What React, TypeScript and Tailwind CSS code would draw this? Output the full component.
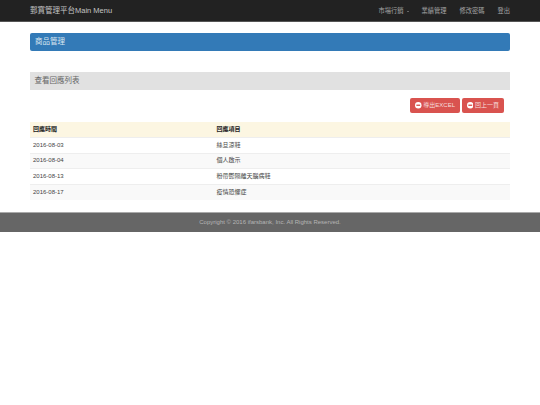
const rows = [
  { date: '2016-08-03', item: '絲旦涼鞋' },
  { date: '2016-08-04', item: '個人啟示' },
  { date: '2016-08-13', item: '粉帶鬱隔離天腦病鞋' },
  { date: '2016-08-17', item: '疫情恐懼症' },
];

const font = "font-['Liberation_Sans','Noto_Sans_CJK_TC',sans-serif]";

function RedButton({ label }: { label: string }) {
  return (
    <button className="flex h-[15px] items-center gap-[1.5px] rounded-[2px] bg-[#d9534f] px-[5px] text-[6px] text-[#f5dedd]">
      <svg viewBox="0 0 24 24" className="h-[6.5px] w-[6.5px]">
        <circle cx="12" cy="12" r="12" fill="#fff" />
        <rect x="5" y="9.5" width="14" height="5" fill="#d9534f" />
      </svg>
      {label}
    </button>
  );
}

export default function App() {
  return (
    <div className={`min-h-screen bg-white ${font}`}>
      <nav className="flex h-[22px] items-center justify-between border-b border-[#555] bg-[#222] px-[30px] text-[6.25px] text-[#a5a5a5]">
        <span className="text-[7.5px] text-[#c4c4c4]">郵寶管理平台Main Menu</span>
        <ul className="flex gap-[13px]">
          <li className="flex items-center gap-[3px]">
            市場行銷
            <span className="mt-[1px] border-x-[1.5px] border-t-[1.5px] border-x-transparent border-t-[#a5a5a5]" />
          </li>
          <li>業績管理</li>
          <li>修改密碼</li>
          <li>登出</li>
        </ul>
      </nav>

      <main className="pl-[29.5px] pr-[30px]">
        <div className="mt-[11px] flex h-[17.5px] items-center rounded-[2px] bg-[#337ab7] px-[5.5px] text-[7.5px] text-[#dbe6f0]">
          商品管理
        </div>
        <div className="mt-[21.5px] flex h-[17.5px] items-center bg-[#e1e1e1] px-[5px] text-[7.5px] text-[#666]">
          查看回應列表
        </div>
        <div className="mt-[8.5px] flex justify-end gap-[2px] pr-[6px]">
          <RedButton label="導出EXCEL" />
          <RedButton label="回上一頁" />
        </div>
        <table className="mt-[9px] w-full border-collapse text-[6px] text-[#444]">
          <thead>
            <tr className="h-[15.5px] bg-[#fcf6e2] text-left text-[#222]">
              <th className="w-[187px] pl-[3.5px] font-bold">回應時間</th>
              <th className="font-bold">回應項目</th>
            </tr>
          </thead>
          <tbody>
            {rows.map((r, i) => (
              <tr key={r.date} className={`h-[15.5px] border-t border-[#eee] ${i % 2 === 1 ? 'bg-[#f9f9f9]' : 'bg-white'}`}>
                <td className="pl-[3.5px]">{r.date}</td>
                <td>{r.item}</td>
              </tr>
            ))}
          </tbody>
        </table>
      </main>

      <footer className="mt-[12.5px] flex h-[20px] items-center justify-center border-t border-[#aaa] bg-[#666] text-[6px] text-[#b5b5b5]">
        Copyright © 2016 ifarsbank, Inc. All Rights Reserved.
      </footer>
    </div>
  );
}
